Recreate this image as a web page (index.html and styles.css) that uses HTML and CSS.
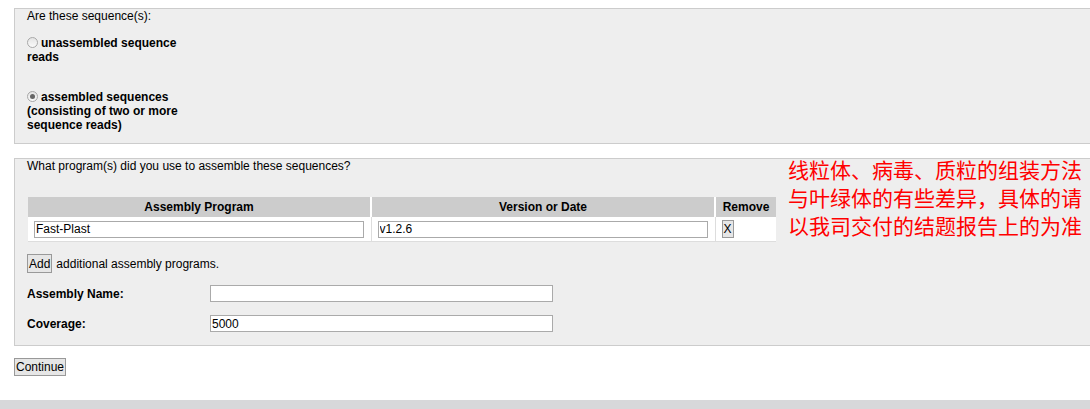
FILE: index.html
```html
<!DOCTYPE html>
<html lang="en">
<head>
    <meta charset="UTF-8">
    <title>Assembly</title>
    <link rel="stylesheet" href="styles.css">
</head>
<body>
    <form class="page">
        <div class="panel panel-type">
            <p class="question">Are these sequence(s):</p>
            <label class="choice first"><input type="radio" name="seqtype" class="radio">unassembled sequence reads</label>
            <label class="choice second"><input type="radio" name="seqtype" class="radio" checked>assembled sequences (consisting of two or more sequence reads)</label>
        </div>

        <div class="panel panel-program">
            <p class="question">What program(s) did you use to assemble these sequences?</p>
            <table class="programs">
                <tr>
                    <th class="col-prog">Assembly Program</th>
                    <th class="col-ver">Version or Date</th>
                    <th class="col-rm">Remove</th>
                </tr>
                <tr>
                    <td><input type="text" class="field" value="Fast-Plast"></td>
                    <td><input type="text" class="field" value="v1.2.6"></td>
                    <td><button type="button" class="btn btn-x">X</button></td>
                </tr>
            </table>
            <div class="add-row">
                <button type="button" class="btn">Add</button> additional assembly programs.
            </div>
            <div class="form-row name-row">
                <span class="label">Assembly Name:</span>
                <input type="text" class="field wide">
            </div>
            <div class="form-row coverage-row">
                <span class="label">Coverage:</span>
                <input type="text" class="field wide" value="5000">
            </div>
        </div>

        <button type="button" class="btn btn-continue">Continue</button>
    </form>

    <div class="footer-bar"></div>

    <p class="note">线粒体、病毒、质粒的组装方法<br>与叶绿体的有些差异，具体的请<br>以我司交付的结题报告上的为准</p>
</body>
</html>
```

FILE: styles.css
```css
body {
    margin: 0;
    font-family: "Liberation Sans", Arial, sans-serif;
    font-size: 12px;
    line-height: 14px;
    color: #000;
    background: #fff;
}
.page {
    padding: 8px 0 0 14px;
    height: 400px;
    box-sizing: border-box;
}
.panel {
    background: #eee;
    border: 1px solid #ccc;
    border-right: none;
    padding: 0 0 0 12px;
}
.panel-type {
    padding-bottom: 11px;
}
.panel-program {
    margin-top: 14px;
    padding-bottom: 13px;
}
.question {
    margin: 0;
    height: 14px;
}
.choice {
    display: block;
    width: 160px;
    font-weight: bold;
}
.choice.first {
    margin-top: 13px;
}
.choice.second {
    margin-top: 26px;
}
.radio {
    appearance: none;
    display: inline-block;
    vertical-align: -1px;
    width: 11px;
    height: 11px;
    margin: 0 3px 0 0;
    border: 1px solid #a8a8a8;
    border-radius: 50%;
    background: linear-gradient(#e4e4e4, #fafafa);
    position: relative;
}
.radio:checked::after {
    content: "";
    position: absolute;
    left: 2px;
    top: 2px;
    width: 5px;
    height: 5px;
    border-radius: 50%;
    background: #666;
}
.programs {
    margin-top: 24px;
    margin-left: 1px;
    border-collapse: collapse;
    width: 748px;
    background: #fff;
}
.programs th {
    background: #ccc;
    height: 20px;
    padding: 0;
    font-weight: bold;
    border-right: 2px solid #fff;
}
.programs th:last-child {
    border-right: none;
}
.col-prog, .col-ver {
    width: 342px;
}
.programs td {
    background: #fff;
    height: 24px;
    padding: 0 6px;
    border-right: 1px solid #ddd;
    border-bottom: 1px solid #ddd;
}
.programs td:last-child {
    border-right: none;
}
.field {
    display: block;
    box-sizing: border-box;
    width: 330px;
    height: 17px;
    padding: 0 1px;
    border: 1px solid #aaa;
    font-family: "Liberation Sans", Arial, sans-serif;
    font-size: 12px;
    background: #fff;
}
.field.wide {
    width: 343px;
}
.btn {
    font-family: "Liberation Sans", Arial, sans-serif;
    font-size: 12px;
    line-height: 14px;
    padding: 1px 1px;
    border: 1px solid #999;
    background: #e6e6e6;
    color: #000;
    border-radius: 0;
}
.btn-x {
    display: block;
    height: 18px;
    padding: 0 1px;
}
.add-row {
    margin-top: 12px;
    display: flex;
    align-items: center;
    gap: 4px;
}
.add-row .btn {
    height: 19px;
}
.form-row {
    display: flex;
    align-items: center;
    font-weight: bold;
}
.name-row {
    margin-top: 12px;
}
.coverage-row {
    margin-top: 13px;
}
.label {
    width: 183px;
}
.btn-continue {
    margin-top: 12px;
    height: 18px;
    padding: 0 1px;
}
.footer-bar {
    height: 9px;
    background: #d7d8da;
}
.note {
    position: absolute;
    left: 788px;
    top: 155px;
    margin: 0;
    color: #ff0000;
    font-family: "Noto Sans CJK SC", sans-serif;
    font-size: 21px;
    line-height: 28px;
}
```
